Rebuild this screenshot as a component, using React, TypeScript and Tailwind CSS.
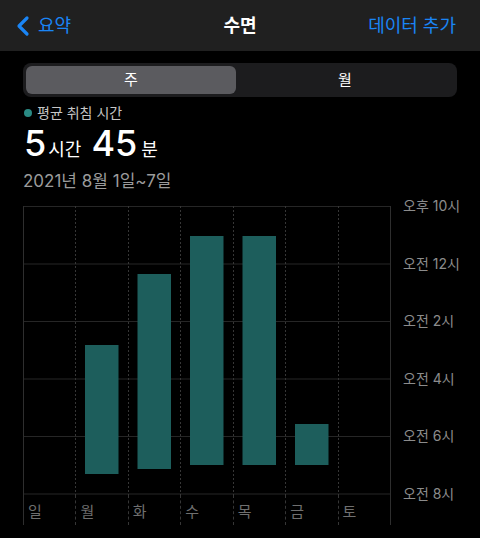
import { ChevronLeft } from "lucide-react";

const days = ["일", "월", "화", "수", "목", "금", "토"];
const hours = ["오후 10시", "오전 12시", "오전 2시", "오전 4시", "오전 6시", "오전 8시"];

// bars in plot coords (x from chart left, y from top line)
const bars = [
  { x: 62, top: 139, bottom: 268 },
  { x: 114.5, top: 68, bottom: 263 },
  { x: 167, top: 30, bottom: 259 },
  { x: 219.5, top: 30, bottom: 259 },
  { x: 272, top: 218, bottom: 259 },
];

const COL = 367 / 7;

export default function App() {
  return (
    <div
      className="w-[480px] h-[538px] bg-black text-white overflow-hidden"
      style={{ fontFamily: 'Inter, "Noto Sans CJK KR", sans-serif' }}
    >
      {/* --- Nav bar --- */}
      <div className="h-[51px] bg-[#202020] flex items-center justify-between pl-[7px] pr-[24px] relative">
        <div className="flex items-center text-[#1a85f5]">
          <ChevronLeft size={32} strokeWidth={2.4} />
          <span className="text-[18px] ml-[-1px]">요약</span>
        </div>
        <span className="absolute left-1/2 -translate-x-1/2 text-[18px] font-semibold">수면</span>
        <span className="text-[18px] text-[#1a85f5]">데이터 추가</span>
      </div>

      {/* --- Segmented control --- */}
      <div className="mx-[23px] mt-[12px] h-[34px] rounded-[8px] bg-[#1c1c1e] p-[3px] flex">
        <div className="w-[210px] rounded-[6px] bg-[#5b5b5f] flex items-center justify-center text-[15px]">주</div>
        <div className="flex-1 flex items-center justify-center text-[15px]">월</div>
      </div>

      {/* --- Summary --- */}
      <div className="px-[24px] mt-[6px]">
        <div className="flex items-center gap-[5px] text-[14px] text-[#c6c6c6] leading-[20px]">
          <span className="w-[8px] h-[8px] rounded-full bg-[#2a8a84]" />
          평균 취침 시간
        </div>
        <div className="flex items-baseline leading-[38px] mt-[1px]">
          <span className="text-[36px] font-medium">5</span>
          <span className="text-[18px] ml-[2px] mr-[10px]">시간</span>
          <span className="text-[36px] font-medium">45</span>
          <span className="text-[18px] ml-[4px]">분</span>
        </div>
        <div className="text-[17px] text-[#9b9b9b] leading-[24px] -ml-[1px]">2021년 8월 1일~7일</div>
      </div>

      {/* --- Chart --- */}
      <div className="flex mt-[13px] ml-[23px]">
        <div className="w-[368px]">
          <svg width="368" height="289" className="block">
            {[0.5, 58, 115.5, 173, 230.5, 288].map((y) => (
              <line key={y} x1="0" x2="368" y1={y} y2={y} stroke="#262626" strokeWidth="1" />
            ))}
            <line x1="0.5" x2="0.5" y1="0" y2="289" stroke="#2e2e2e" />
            <line x1="367.5" x2="367.5" y1="0" y2="289" stroke="#2e2e2e" />
            {[1, 2, 3, 4, 5, 6].map((i) => (
              <line
                key={i}
                x1={Math.round(i * COL) + 0.5}
                x2={Math.round(i * COL) + 0.5}
                y1="0"
                y2="289"
                stroke="#363636"
                strokeDasharray="2 2"
              />
            ))}
            {bars.map((b) => (
              <rect key={b.x} x={b.x} y={b.top} width="33.5" height={b.bottom - b.top} fill="#1d5e5c" />
            ))}
          </svg>
          <div className="grid grid-cols-7 h-[30px] border-r border-[#2e2e2e]">
            {days.map((d, i) => (
              <div
                key={d}
                className={
                  i === 0
                    ? "border-l border-[#2e2e2e] text-[15px] text-[#6f6f6f] pl-[4px] pt-[8px] leading-[18px]"
                    : "border-l border-dashed border-[#363636] text-[15px] text-[#6f6f6f] pl-[4px] pt-[8px] leading-[18px]"
                }
              >
                {d}
              </div>
            ))}
          </div>
        </div>
        <div className="flex flex-col ml-[12px] -mt-[10px]">
          {hours.map((h) => (
            <div key={h} className="h-[57.5px] text-[14px] text-[#8c8c8c] leading-[20px] whitespace-nowrap">
              {h}
            </div>
          ))}
        </div>
      </div>
    </div>
  );
}
